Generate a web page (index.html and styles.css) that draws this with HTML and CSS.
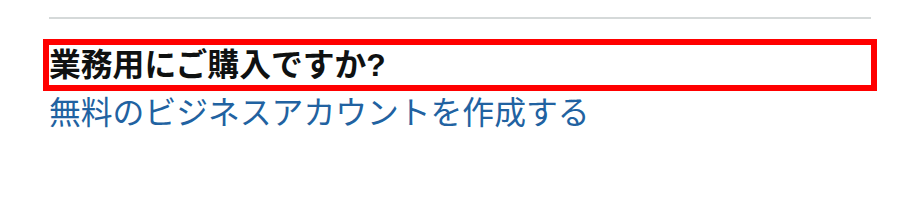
FILE: index.html
```html
<!DOCTYPE html>
<html lang="ja">
<head>
  <meta charset="UTF-8">
  <meta name="viewport" content="width=device-width, initial-scale=1.0">
  <title>ビジネスアカウント</title>
  <link rel="stylesheet" href="styles.css">
</head>
<body>
  <div class="business-box">
    <hr class="divider">
    <div class="promo">
      <h4 class="promo-title">業務用にご購入ですか?</h4>
      <a class="promo-link" href="#">無料のビジネスアカウントを作成する</a>
    </div>
  </div>
</body>
</html>
```

FILE: styles.css
```css
* {
  margin: 0;
  padding: 0;
  box-sizing: border-box;
}

body {
  width: 920px;
  height: 200px;
  background: #fff;
  font-family: "Liberation Sans", "Noto Sans CJK JP", sans-serif;
  color: #0f1111;
  overflow: hidden;
}

.business-box {
  padding: 17px 49px 0;
}

.divider {
  border: none;
  height: 2px;
  background: #d5d9d9;
}

.promo {
  margin-top: 26px;
}

.promo-title {
  font-size: 31.8px;
  font-weight: 700;
  line-height: 40px;
  outline: 6px solid #ff0000;
}

.promo-link {
  display: block;
  margin-top: 6px;
  font-size: 31.8px;
  line-height: 44px;
  color: #2162a1;
  text-decoration: none;
}
```
